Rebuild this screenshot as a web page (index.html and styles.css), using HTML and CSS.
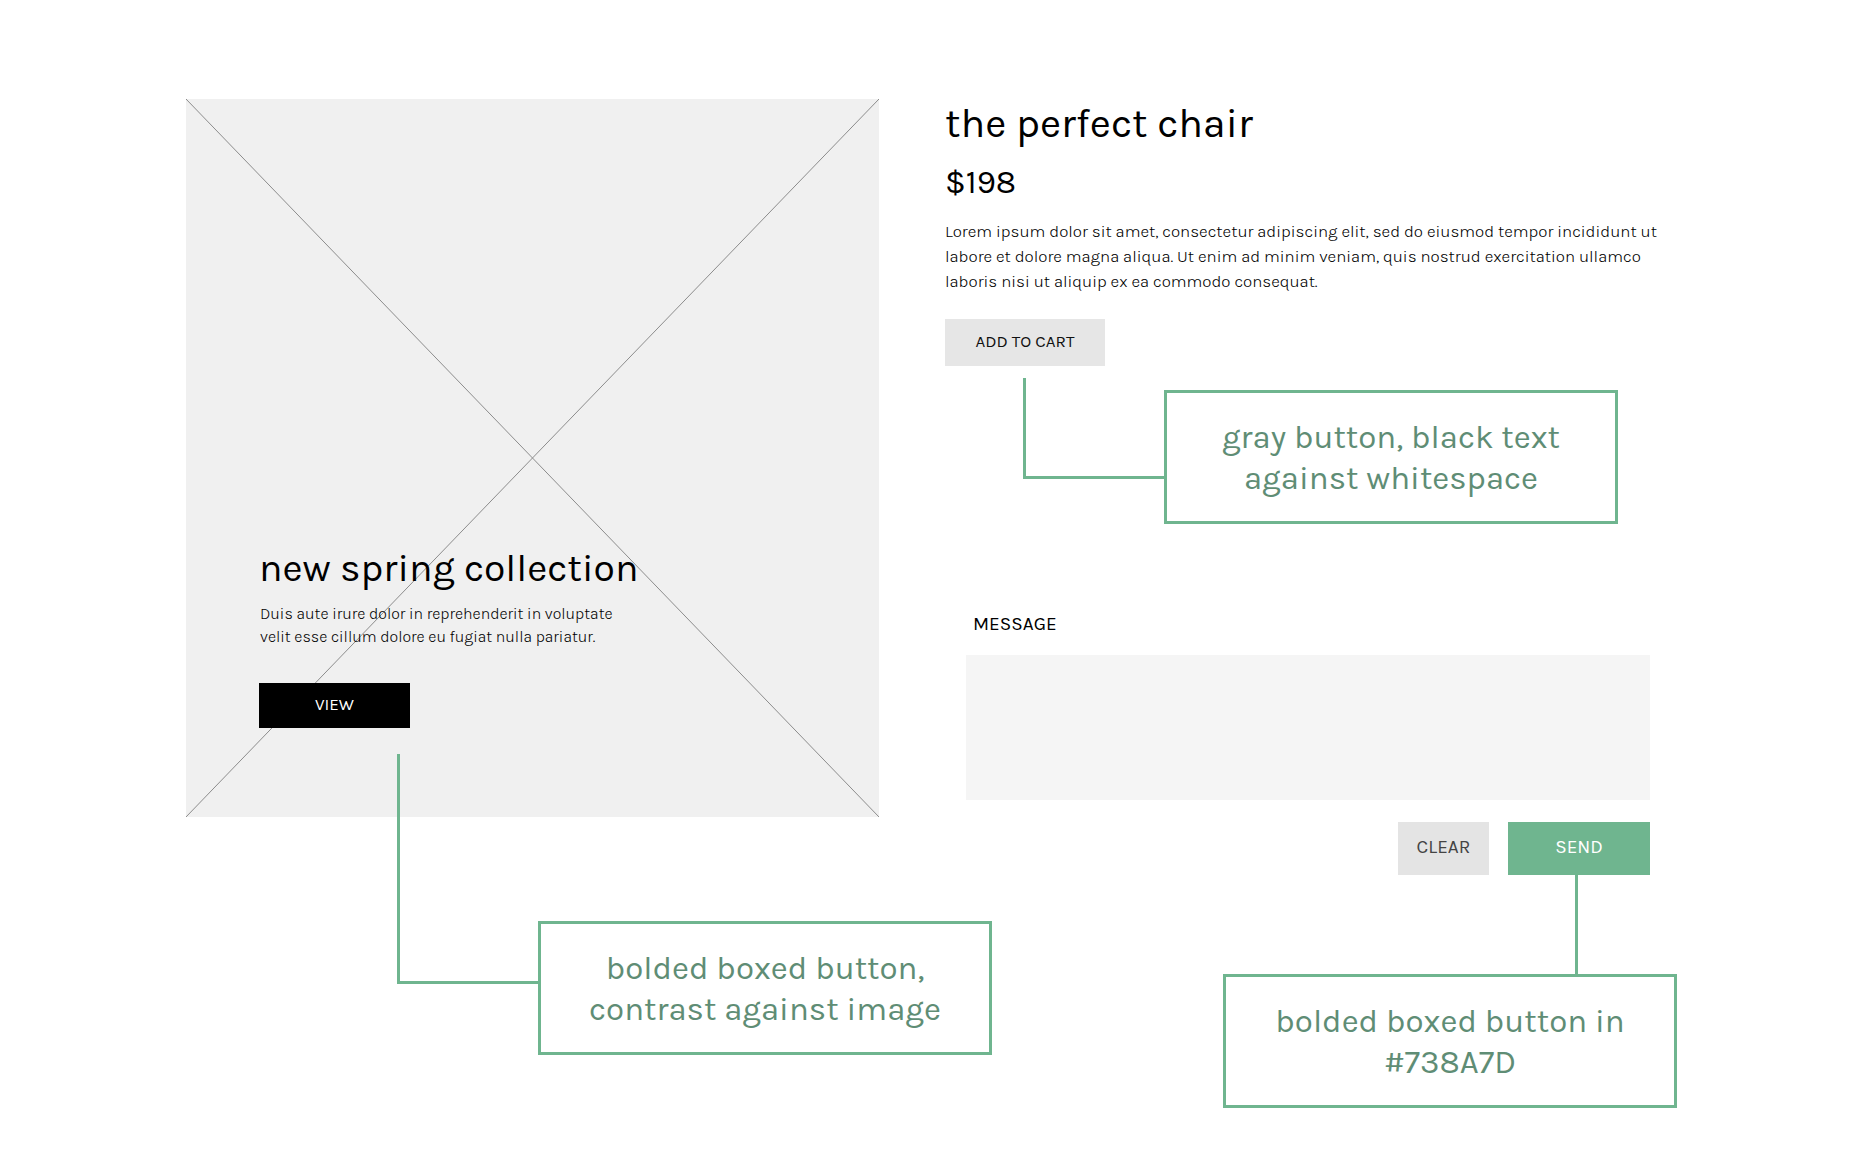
FILE: index.html
```html
<!DOCTYPE html>
<html lang="en">
<head>
<meta charset="utf-8">
<meta name="viewport" content="width=device-width, initial-scale=1">
<title>Button styles</title>
<link rel="stylesheet" href="styles.css">
</head>
<body>
<main class="board">
  <div class="column">
    <section class="hero">
      <svg class="hero-cross" viewBox="0 0 100 100" preserveAspectRatio="none" aria-hidden="true">
        <path d="M0 0L100 100M100 0L0 100"/>
      </svg>
      <h2 class="heading hero-heading">new spring collection</h2>
      <p class="hero-text">Duis aute irure dolor in reprehenderit in voluptate<br>velit esse cillum dolore eu fugiat nulla pariatur.</p>
      <button class="button button-view" type="button">VIEW</button>
    </section>
    <div class="note note-hero">
      <div class="elbow"></div>
      <p class="callout">bolded boxed button,<br>contrast against image</p>
    </div>
  </div>

  <div class="column">
    <section class="product">
      <h1 class="heading">the perfect chair</h1>
      <p class="price">$198</p>
      <p class="product-text">Lorem ipsum dolor sit amet, consectetur adipiscing elit, sed do eiusmod tempor incididunt ut<br>labore et dolore magna aliqua. Ut enim ad minim veniam, quis nostrud exercitation ullamco<br>laboris nisi ut aliquip ex ea commodo consequat.</p>
      <button class="button button-cart" type="button">ADD TO CART</button>
    </section>
    <div class="note note-cart">
      <div class="elbow"></div>
      <p class="callout">gray button, black text<br>against whitespace</p>
    </div>
    <form class="message">
      <label class="message-label" for="message">MESSAGE</label>
      <textarea class="message-box" id="message"></textarea>
      <div class="actions">
        <button class="button button-clear" type="reset">CLEAR</button>
        <button class="button button-send" type="button">SEND</button>
      </div>
    </form>
    <div class="note-send">
      <div class="stem"></div>
      <p class="callout">bolded boxed button in<br>#738A7D</p>
    </div>
  </div>
</main>
</body>
</html>
```
FILE: styles.css
```css
* {
  box-sizing: border-box;
}

body {
  margin: 0;
  background: #fff;
  color: #000;
  font-family: Karla, Inter, sans-serif;
  font-weight: 400;
}

h1,
h2,
p {
  margin: 0;
}

.board {
  display: grid;
  grid-template-columns: 693fr 732fr;
  column-gap: 66px;
  padding: 99px 192px 47px 186px;
}

.column {
  display: flex;
  flex-direction: column;
  min-width: 0;
}

.heading {
  font-size: 41px;
  font-weight: 400;
  line-height: 48px;
  white-space: nowrap;
}

.button {
  padding: 0 0 3px;
  border: 0;
  border-radius: 0;
  font-family: inherit;
  font-size: 17px;
  cursor: pointer;
}

/* Image placeholder with its caption */
.hero {
  position: relative;
  display: flex;
  flex-direction: column;
  align-items: flex-start;
  justify-content: flex-end;
  aspect-ratio: 693 / 718;
  padding: 0 73px 89px;
  background: #f0f0f0;
}

.hero > * {
  position: relative;
}

.hero > .hero-cross {
  position: absolute;
  inset: 0;
  width: 100%;
  height: 100%;
}

.hero-cross path {
  fill: none;
  stroke: #8c8c8c;
  stroke-width: 1px;
  vector-effect: non-scaling-stroke;
}

.hero-heading {
  font-size: 39px;
}

.hero-text {
  margin: 10px 0 35px 1px;
  font-size: 16px;
  font-weight: 300;
  line-height: 23px;
  white-space: nowrap;
}

.button-view {
  width: 151px;
  height: 45px;
  background: #000;
  color: #fff;
}

/* Product details */
.product {
  display: flex;
  flex-direction: column;
  align-items: flex-start;
}

.price {
  margin-top: 15px;
  font-size: 33px;
  line-height: 40px;
}

.product-text {
  margin: 17px 0 25px;
  font-size: 17px;
  font-weight: 300;
  line-height: 25px;
  white-space: nowrap;
}

.button-cart {
  width: 160px;
  height: 47px;
  background: #e6e6e6;
  color: #111;
}

/* Annotations */
.note {
  position: relative;
  display: flex;
  align-items: flex-start;
}

.elbow {
  flex: none;
  width: 141px;
  border: solid #6fb58f;
  border-width: 0 0 3px 3px;
}

.callout {
  flex: none;
  width: 454px;
  padding: 24px 0 22px;
  border: 3px solid #6fb58f;
  color: #5f8d75;
  font-size: 33px;
  line-height: 41px;
  text-align: center;
  white-space: nowrap;
}

.note-hero {
  margin: -63px 0 0 211px;
}

.note-hero .elbow {
  height: 230px;
}

.note-hero .callout {
  margin-top: 167px;
}

.note-cart {
  margin: 12px 0 0 78px;
}

.note-cart .elbow {
  height: 101px;
}

.note-cart .callout {
  margin-top: 12px;
}

.note-send {
  display: flex;
  flex-direction: column;
  align-items: flex-end;
}

.stem {
  width: 3px;
  height: 99px;
  margin-right: 99px;
  background: #6fb58f;
}

/* Message form */
.message {
  display: flex;
  flex-direction: column;
  margin: 88px 27px 0 21px;
}

.message-label {
  padding-left: 7px;
  font-size: 19px;
  line-height: 24px;
}

.message-box {
  height: 145px;
  margin: 19px 0 22px;
  padding: 12px;
  border: 0;
  background: #f5f5f5;
  font: inherit;
  resize: none;
}

.actions {
  display: flex;
  justify-content: flex-end;
  gap: 19px;
}

.actions .button {
  height: 53px;
  font-size: 19px;
}

.button-clear {
  width: 91px;
  background: #e4e4e4;
  color: #444;
}

.button-send {
  width: 142px;
  background: #6fb58f;
  color: #fff;
}
```
